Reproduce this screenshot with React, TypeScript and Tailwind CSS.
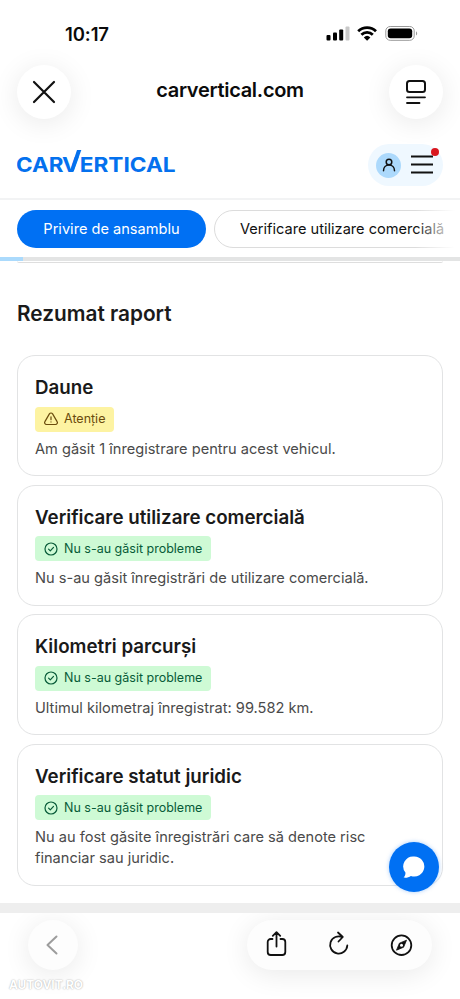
import React from 'react';
import clsx from 'clsx';

type Status = 'warning' | 'ok';

const sections: { title: string; status: Status; text: string }[] = [
	{ title: 'Daune', status: 'warning', text: 'Am găsit 1 înregistrare pentru acest vehicul.' },
	{ title: 'Verificare utilizare comercială', status: 'ok', text: 'Nu s-au găsit înregistrări de utilizare comercială.' },
	{ title: 'Kilometri parcurși', status: 'ok', text: 'Ultimul kilometraj înregistrat: 99.582 km.' },
	{ title: 'Verificare statut juridic', status: 'ok', text: 'Nu au fost găsite înregistrări care să denote risc financiar sau juridic.' },
];

const StatusBar = () => (
	<div className="flex h-16 items-start justify-between pt-[23px] pr-[42px] pl-[65px]">
		<span className="text-[18.5px] leading-[22px] font-semibold tracking-[-0.1px]">10:17</span>
		<div className="flex pt-[2px]">
			<svg width="92" height="18" viewBox="0 0 92 18" fill="#000">
				<rect x="0.5" y="10" width="4" height="5.5" rx="1" />
				<rect x="7" y="7.5" width="4" height="8" rx="1" />
				<rect x="13.2" y="4.5" width="4" height="11" rx="1" />
				<rect x="19.5" y="1.5" width="4" height="14" rx="1" fill="#c8c8c8" />
				<g fill="none" stroke="#000" strokeWidth="2.8">
					<path d="M32.2 6.2a13 13 0 0 1 17.8 0" />
					<path d="M35.4 9.7a8.3 8.3 0 0 1 11.4 0" />
				</g>
				<path d="M37.8 12.4a4.8 4.8 0 0 1 6.6 0L41.1 15.7z" />
				<rect x="59.8" y="1.5" width="28.4" height="13.8" rx="4.4" fill="none" stroke="#999" />
				<rect x="61.8" y="3.5" width="24.4" height="9.8" rx="2.8" />
				<path d="M90 6.2v4.4c1.6-.8 1.6-3.6 0-4.4z" fill="#999" />
			</svg>
		</div>
	</div>
);

const BrowserBar = () => (
	<div className="flex h-[55px] items-center justify-between px-[17px]">
		<div className="flex size-[54px] items-center justify-center rounded-full bg-white shadow-[0_4px_28px_rgba(0,0,0,0.09)]">
			<svg width="24" height="24" viewBox="0 0 24 24" stroke="#111" strokeWidth="2.2" strokeLinecap="round">
				<path d="M2 2l20 20M22 2L2 22" />
			</svg>
		</div>
		<span className="pb-1 text-[20px] leading-6 font-semibold tracking-[-0.3px]">carvertical.com</span>
		<div className="flex size-[54px] items-center justify-center rounded-full bg-white shadow-[0_4px_28px_rgba(0,0,0,0.09)]">
			<svg width="22" height="26" viewBox="0 0 22 26" fill="none" stroke="#111" strokeWidth="2" strokeLinecap="round">
				<rect x="2" y="2" width="18" height="11" rx="2.5" />
				<path d="M2 18.3h18M2 24h12.5" strokeWidth="1.8" />
			</svg>
		</div>
	</div>
);

const Logo = () => (
	<svg width="160" height="28" viewBox="0 0 160 28" fill="#0471ee">
		<g fontFamily="Inter, sans-serif" fontSize="20" fontWeight="700">
			<text x="-0.9" y="23.500" textLength="47.500" lengthAdjust="spacingAndGlyphs">CAR</text>
			<text x="45" y="23.500" textLength="17" lengthAdjust="spacingAndGlyphs">V</text>
			<text x="62.700" y="23.500" textLength="96" lengthAdjust="spacingAndGlyphs">ERTICAL</text>
		</g>
		<path d="M54.200 19.500L60 2h4.300L56.700 23.500h-3.500z" />
	</svg>
);

const SiteHeader = () => (
	<header className="flex h-[81px] items-start justify-between border-b-2 border-[#f2f3f4] px-[17px] pt-[25px]">
		<div className="pt-[4px]">
			<Logo />
		</div>
		<div className="relative flex h-[42px] w-[75px] items-center gap-[10px] rounded-full bg-[#eff8ff] pl-2">
			<div className="flex size-[25px] items-center justify-center rounded-full bg-[#acd9fc]">
				<svg width="14" height="14" viewBox="0 0 14 14" fill="none" stroke="#111" strokeWidth="1.5" strokeLinecap="round">
					<circle cx="7" cy="4" r="2.8" />
					<path d="M1.5 12.8C1.5 9 4 7 7 7s5.5 2 5.5 5.8" />
				</svg>
			</div>
			<svg width="22" height="20" viewBox="0 0 22 20" stroke="#111" strokeWidth="1.8">
				<path d="M0 1.5h22M0 9.5h22M0 17.5h22" />
			</svg>
			<span className="absolute top-1 right-1 size-2 rounded-full bg-[#d9171f]" />
		</div>
	</header>
);

const Tabs = () => (
	<div className="relative flex h-[57px] gap-2 overflow-hidden pt-[10px] pl-[17px] text-[14.6px] whitespace-nowrap">
		<div className="flex h-[38px] w-[189px] shrink-0 items-center justify-center rounded-full bg-[#0070f3] pt-[2px] text-white">
			Privire de ansamblu
		</div>
		<div className="flex h-[38px] w-[256px] shrink-0 items-center rounded-full border-[1.5px] border-[#dcdcdc] pt-[2px] pl-[25px] text-[#111]">
			Verificare utilizare comercială
		</div>
		<div className="absolute top-0 right-0 h-full w-[50px] bg-linear-to-r from-white/0 from-10% to-white to-90%" />
	</div>
);

const Badge = ({ status }: { status: Status }) => (
	<div
		className={clsx(
			'flex h-[25px] w-fit items-center gap-[6px] rounded-[4px] pr-[9px] pl-[9px] text-[12.5px]',
			status === 'warning' ? 'bg-[#fdf3a2] text-[#6a4b0c]' : 'bg-[#cefad5] text-[#075a38]'
		)}
	>
		<svg width="14" height="14" viewBox="0 0 14 14" fill="none" stroke="currentColor" strokeWidth="1.2" strokeLinecap="round" strokeLinejoin="round">
			{status === 'warning' ? (
				<path d="M5.4 1.9a1.9 1.9 0 0 1 3.200 0l4.500 7.700a1.900 1.900 0 0 1-1.600 2.900H2.500A1.900 1.900 0 0 1 .9 9.600zM7 4.800v2.900M7 9.900v.1" />
			) : (
				<>
					<circle cx="7" cy="7" r="6" />
					<path d="M4.6 7.2l1.7 1.7 3.2-3.5" />
				</>
			)}
		</svg>
		<span className="pt-px">{status === 'warning' ? 'Atenție' : 'Nu s-au găsit probleme'}</span>
	</div>
);

const BottomBar = () => (
	<div className="relative h-[86px] overflow-hidden">
		<div className="flex justify-between pt-[7px] pr-[28px] pl-[28px]">
			<div className="flex size-[50px] items-center justify-center rounded-full bg-[#fdfdfd] pr-[3px] shadow-[0_4px_28px_rgba(0,0,0,0.09)]">
				<svg width="12" height="20" viewBox="0 0 12 20" fill="none" stroke="#9c9c9c" strokeWidth="2" strokeLinecap="round" strokeLinejoin="round">
					<path d="M10.5 1.5L1.5 10l9 8.5" />
				</svg>
			</div>
			<div className="flex h-[50px] w-[185px] items-center justify-between rounded-full bg-[#fdfdfd] px-[19px] pb-[3px] shadow-[0_4px_28px_rgba(0,0,0,0.09)]">
				<svg width="22" height="26" viewBox="0 0 22 26" fill="none" stroke="#111" strokeWidth="1.8" strokeLinecap="round" strokeLinejoin="round">
					<path d="M6.5 8H4.7a3 3 0 0 0-3 3v10a3 3 0 0 0 3 3h11.600a3 3 0 0 0 3-3V11a3 3 0 0 0-3-3h-1.800M10.5 15.500V1.300M6.800 4.800l3.700-3.700 3.700 3.700" />
				</svg>
				<svg width="22" height="26" viewBox="0 0 22 26" fill="none" stroke="#111" strokeWidth="1.8" strokeLinecap="round" strokeLinejoin="round">
					<path d="M14.500 6.200A8.600 8.600 0 1 0 19.300 14.500M10 1.500l4.800 4.500-4.300 4.500" />
				</svg>
				<svg width="24" height="26" viewBox="0 0 24 26" fill="none" stroke="#111" strokeWidth="1.8">
					<circle cx="12.5" cy="14.2" r="9.8" />
					<path d="M17.500 9.200l-2.900 7-7.100 3 2.900-7z" fill="#111" strokeWidth="0.8" strokeLinejoin="round" />
					<circle cx="12.5" cy="14.2" r="1.5" fill="#fff" stroke="none" />
				</svg>
			</div>
		</div>
		<span className="absolute top-[64px] left-[9px] text-[12px] leading-4 font-bold tracking-[-0.1px] text-white [text-shadow:0_0_1.5px_#999]">
			AUTOVIT.RO
		</span>
	</div>
);

const App = () => {
	return (
		<div className="relative h-[999px] w-[460px] overflow-hidden bg-white font-[Inter,sans-serif] text-[#0b0b0b]">
			<StatusBar />
			<BrowserBar />
			<SiteHeader />
			<Tabs />

			{/* Reading progress */}
			<div className="h-1 bg-[#e3e4e4]">
				<div className="h-full w-[23px] bg-[#abdafc]" />
			</div>

			<main className="h-[642px] px-[17px]">
				<div className="h-[2px] rounded-b-full border-b border-[#dedede]" />
				<h1 className="mt-[37px] text-[20.8px] leading-[28px] font-semibold text-[#1a1a1a]">Rezumat raport</h1>
				<div className="mt-[27px] flex flex-col gap-[8.6px]">
					{sections.map((section) => (
						<section key={section.title} className="rounded-[18px] border border-[#e2e3e4] px-[17px] pt-[18px] pb-[15.5px]">
							<h2 className="text-[18.75px] leading-[28px] font-semibold text-[#1a1a1a]">{section.title}</h2>
							<div className="mt-[4.5px]">
								<Badge status={section.status} />
							</div>
							<p className="mt-[7px] text-[14.6px] leading-[21px] text-[#4a4a4a]">{section.text}</p>
						</section>
					))}
				</div>
			</main>

			<div className="h-[10px] bg-[#eeeeee]" />
			<BottomBar />

			{/* Chat */}
			<button className="absolute top-[842px] left-[389px] flex size-[50px] items-center justify-center rounded-full bg-[#0070f3] shadow-[0_0_4px_rgba(0,112,243,0.35)]">
				<svg width="22" height="24" viewBox="0 0 22 24" fill="#fff">
					<path d="M11.3 1.5a10 10 0 1 1-3.4 19.4c-2 1.5-4.5 2-7.3 1.7 1.5-1.6 2-3.3 1.8-5A10 10 0 0 1 11.3 1.5z" />
				</svg>
			</button>
		</div>
	);
};

export default App;
